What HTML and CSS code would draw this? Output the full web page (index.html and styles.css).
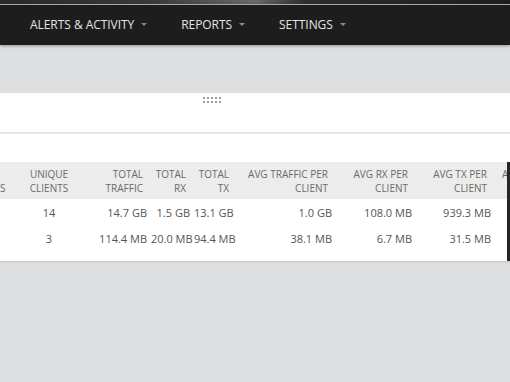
FILE: index.html
```html
<!DOCTYPE html>
<html lang="en">
<head>
    <meta charset="UTF-8">
    <meta name="viewport" content="width=device-width, initial-scale=1.0">
    <title>Reports</title>
    <link rel="stylesheet" href="styles.css">
</head>
<body>
    <div class="topbar"></div>
    <nav class="nav">
        <a class="nav-item">ALERTS &amp; ACTIVITY <span class="caret"></span></a>
        <a class="nav-item">REPORTS <span class="caret"></span></a>
        <a class="nav-item">SETTINGS <span class="caret"></span></a>
    </nav>

    <div class="content">
        <div class="panel">
            <div class="panel-head">
                <div class="handle">
                    <span></span><span></span><span></span><span></span><span></span>
                    <span></span><span></span><span></span><span></span><span></span>
                </div>
            </div>
            <div class="panel-filter"></div>
            <div class="table-wrap">
                <table class="report">
                    <colgroup>
                        <col style="width: 50px">
                        <col style="width: 78px">
                        <col style="width: 63px">
                        <col style="width: 43px">
                        <col style="width: 43px">
                        <col style="width: 99px">
                        <col style="width: 80px">
                        <col style="width: 79px">
                        <col style="width: 80px">
                    </colgroup>
                    <thead>
                        <tr>
                            <th class="first">USER<br>SESSIONS</th>
                            <th class="center">UNIQUE<br>CLIENTS</th>
                            <th>TOTAL<br>TRAFFIC</th>
                            <th>TOTAL<br>RX</th>
                            <th>TOTAL<br>TX</th>
                            <th>AVG TRAFFIC PER<br>CLIENT</th>
                            <th>AVG RX PER<br>CLIENT</th>
                            <th>AVG TX PER<br>CLIENT</th>
                            <th class="left">AVG SESSION<br>&nbsp;</th>
                        </tr>
                    </thead>
                    <tbody>
                        <tr>
                            <td></td>
                            <td class="center">14</td>
                            <td>14.7 GB</td>
                            <td>1.5 GB</td>
                            <td>13.1 GB</td>
                            <td>1.0 GB</td>
                            <td>108.0 MB</td>
                            <td>939.3 MB</td>
                            <td></td>
                        </tr>
                        <tr>
                            <td></td>
                            <td class="center">3</td>
                            <td>114.4 MB</td>
                            <td>20.0 MB</td>
                            <td>94.4 MB</td>
                            <td>38.1 MB</td>
                            <td>6.7 MB</td>
                            <td>31.5 MB</td>
                            <td></td>
                        </tr>
                    </tbody>
                </table>
            </div>
        </div>
    </div>
</body>
</html>
```

FILE: styles.css
```css
html, body {
    margin: 0;
    overflow: hidden;
}
body {
    font-family: 'Open Sans', 'Liberation Sans', sans-serif;
    background-color: #dedfe1;
    height: 382px;
}
.topbar {
    height: 4px;
    background: linear-gradient(90deg, #2a2a2a 0%, #3a3a3a 30%, #6a6a6a 50%, #2e2e2e 60%, #1e1e1e 100%);
}
.nav {
    display: flex;
    align-items: center;
    gap: 34px;
    height: 40px;
    padding-left: 30px;
    background: #1d1d1d;
    border-top: 1px solid #a8a8a8;
    box-shadow: 0 1px 3px rgba(0,0,0,0.35);
}
.nav-item {
    display: flex;
    align-items: center;
    color: #e4e4e4;
    font-size: 12px;
    letter-spacing: -0.05px;
    padding-bottom: 2px;
}
.caret {
    display: inline-block;
    margin-left: 7px;
    width: 0;
    height: 0;
    border-left: 3.5px solid transparent;
    border-right: 3.5px solid transparent;
    border-top: 3.5px solid #8a8a8a;
}
.content {
    padding-top: 48px;
}
.panel {
    background: white;
    box-shadow: 0 1px 2px rgba(0,0,0,0.12);
}
.panel-head {
    height: 41px;
    padding-left: 203px;
    padding-top: 4px;
    box-sizing: border-box;
    border-bottom: 2px solid #e6e6e6;
}
.handle {
    display: grid;
    grid-template-columns: repeat(5, 2px);
    gap: 2px;
}
.handle span {
    width: 2px;
    height: 2px;
    background: #9a9a9a;
}
.panel-filter {
    height: 28px;
}
.table-wrap {
    width: 507px;
    overflow: hidden;
    border-right: 3px solid #262626;
    padding-bottom: 10px;
}
.report {
    table-layout: fixed;
    border-collapse: collapse;
    margin-left: -40px;
    width: 615px;
    font-size: 11px;
    color: #555;
}
.report th {
    background: #ececec;
    color: #6a6a6a;
    font-size: 10px;
    font-weight: normal;
    text-align: right;
    line-height: 14px;
    height: 37px;
    padding: 0 8px 0 0;
    white-space: nowrap;
    overflow: hidden;
}
.report td {
    text-align: right;
    height: 26px;
    padding: 0 4px 0 0;
    white-space: nowrap;
}
.report .center {
    text-align: center;
    padding: 0;
}
.report .first {
    text-align: center;
    padding: 0 13px 0 0;
    overflow: visible;
}
.report .left {
    text-align: left;
    padding-left: 7px;
}
```
